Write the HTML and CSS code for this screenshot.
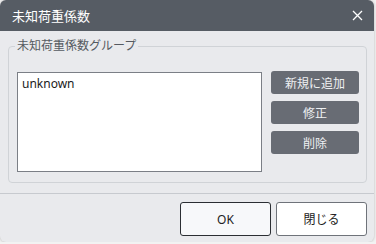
FILE: index.html
```html
<!DOCTYPE html>
<html lang="ja">
<head>
    <meta charset="UTF-8">
    <meta name="viewport" content="width=device-width, initial-scale=1.0">
    <title>未知荷重係数</title>
    <link rel="stylesheet" href="styles.css">
</head>
<body>
    <div class="dialog">
        <div class="titlebar">
            <span class="title">未知荷重係数</span>
            <button class="close-x" aria-label="閉じる">
                <svg width="11" height="11" viewBox="0 0 11 11">
                    <path d="M1 1 L10 10 M10 1 L1 10" stroke="#ffffff" stroke-width="1.3" fill="none"/>
                </svg>
            </button>
        </div>

        <fieldset class="group">
            <legend>未知荷重係数グループ</legend>
            <div class="group-body">
                <div class="listbox">
                    <div class="list-item">unknown</div>
                </div>
                <div class="side-buttons">
                    <button class="side-btn">新規に追加</button>
                    <button class="side-btn">修正</button>
                    <button class="side-btn">削除</button>
                </div>
            </div>
        </fieldset>

        <div class="separator"></div>

        <div class="footer">
            <button class="footer-btn ok-btn">OK</button>
            <button class="footer-btn">閉じる</button>
        </div>
    </div>
</body>
</html>
```

FILE: styles.css
```css
body {
    margin: 0;
    background: #f2f2f2;
    font-family: 'Noto Sans', 'Noto Sans CJK JP', sans-serif;
}

.dialog {
    width: 374px;
    height: 242px;
    background: #e9eaed;
    border-radius: 6px;
    overflow: hidden;
    display: flex;
    flex-direction: column;
    box-shadow: 0 0 3px rgba(0,0,0,0.25);
}

.titlebar {
    height: 31px;
    flex: none;
    background: #565c64;
    display: flex;
    align-items: center;
    justify-content: space-between;
    padding: 0 10px 0 12px;
}

.title {
    color: #ffffff;
    font-size: 13px;
}

.close-x {
    background: none;
    border: none;
    padding: 0;
    width: 14px;
    height: 14px;
    display: flex;
    align-items: center;
    justify-content: center;
}

.group {
    margin: 7px 7px 0 8px;
    padding: 17px 7px 10px 8px;
    border: 1px solid #d0d3d7;
    border-radius: 4px;
    min-width: 0;
}

.group legend {
    font-size: 12px;
    line-height: 16px;
    color: #555a61;
    padding: 0 2px;
    margin-left: -2px;
}

.group-body {
    display: flex;
    gap: 9px;
}

.listbox {
    width: 243px;
    height: 98px;
    background: #ffffff;
    border: 1px solid #7b7f86;
    margin-top: 1px;
}

.list-item {
    font-size: 12px;
    line-height: 16px;
    color: #1a1a1a;
    padding: 3px 4px;
}

.side-buttons {
    display: flex;
    flex-direction: column;
    gap: 7px;
}

.side-btn {
    width: 88px;
    height: 23px;
    background: #686c74;
    color: #eef0f2;
    border: none;
    border-radius: 3px;
    font-family: inherit;
    font-size: 12px;
    padding: 0;
}

.separator {
    height: 1px;
    background: #c7cacf;
    margin-top: 10px;
}

.footer {
    display: flex;
    justify-content: flex-end;
    gap: 5px;
    padding: 8px 7px 0 0;
}

.footer-btn {
    width: 91px;
    height: 34px;
    background: #ffffff;
    border: 1px solid #6f737a;
    border-radius: 3px;
    font-family: inherit;
    font-size: 12px;
    color: #222;
    padding: 0;
}

.ok-btn {
    background: #f7f8fa;
    border-color: #2b2e33;
}
```
